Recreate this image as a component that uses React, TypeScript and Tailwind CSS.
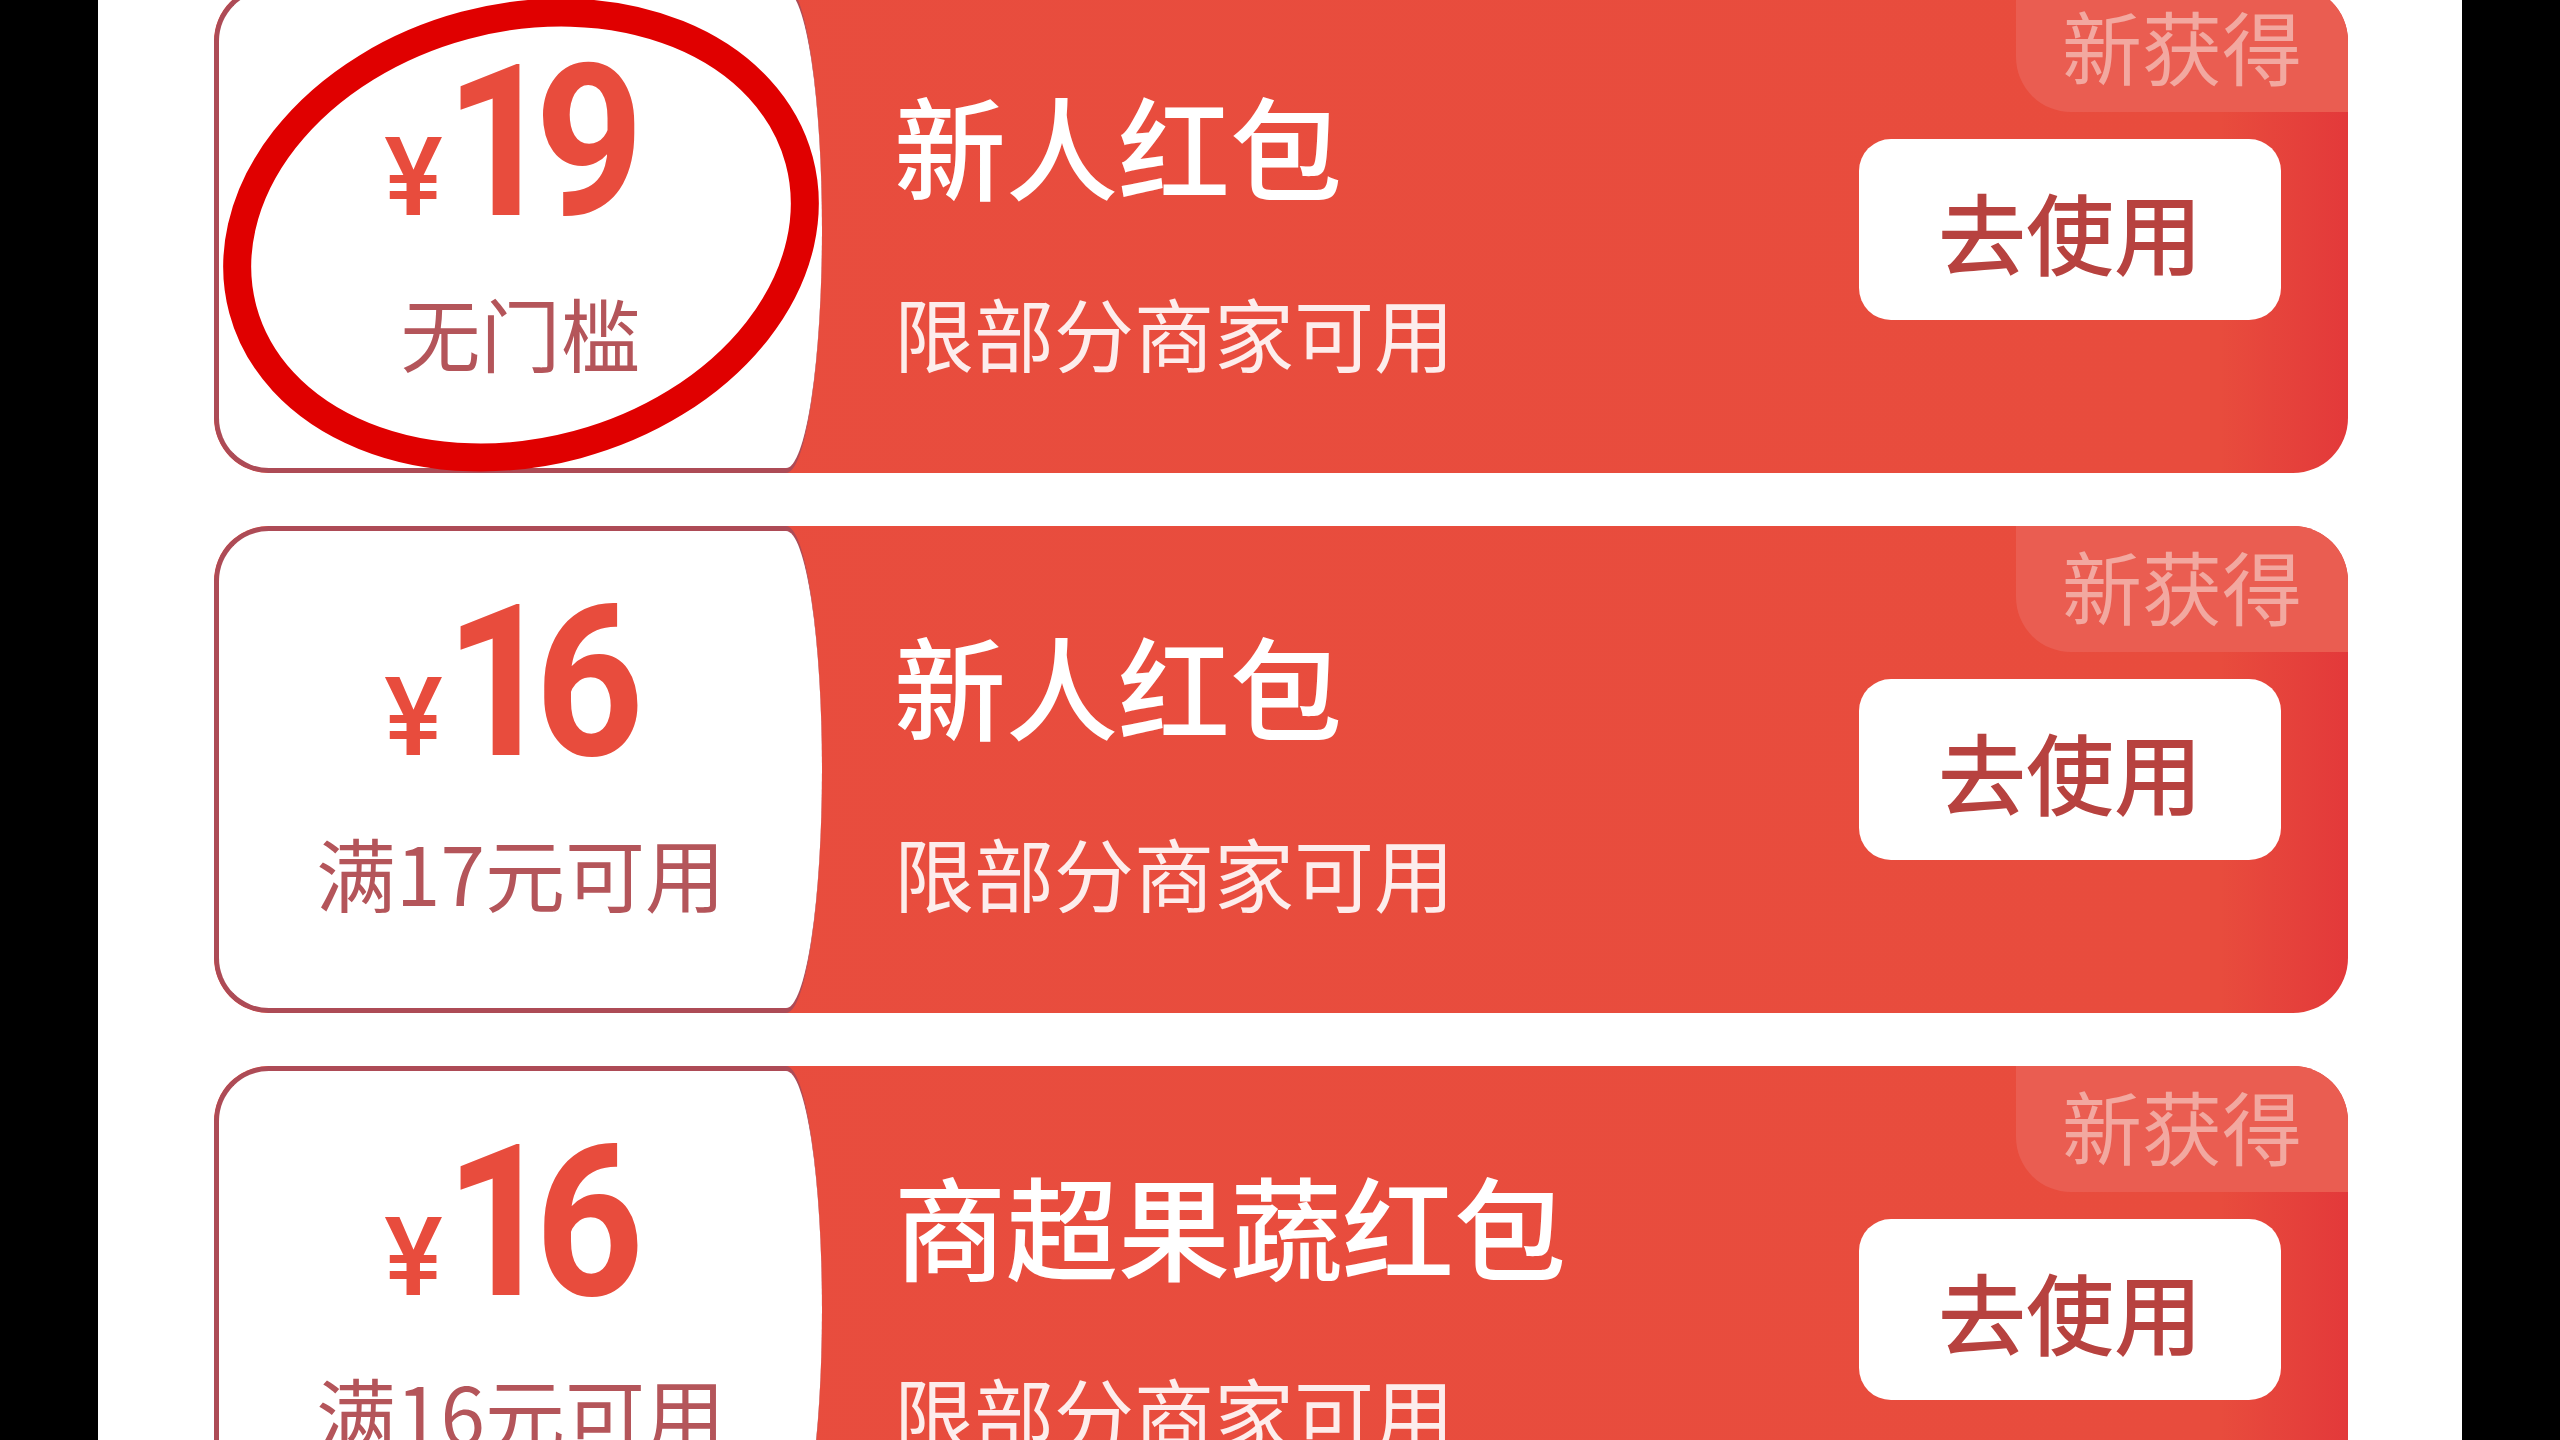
import React from "react";

type Coupon = { amount: string; cond: string; title: string; circled?: boolean };

const coupons: Coupon[] = [
  { amount: "19", cond: "无门槛", title: "新人红包", circled: true },
  { amount: "16", cond: "满17元可用", title: "新人红包" },
  { amount: "16", cond: "满16元可用", title: "商超果蔬红包" },
];

const cjk = "font-['Noto_Sans_CJK_SC','Noto_Sans',sans-serif]";

function CouponCard({ c }: { c: Coupon }) {
  return (
    <div className="relative shrink-0">
      <div className="relative flex h-[487px] overflow-hidden rounded-[55px] bg-[linear-gradient(90deg,#e84d3e_0%,#e84c3d_94%,#e3393a_100%)]">
        {/* left white stub */}
        <div className="flex w-[608px] shrink-0 flex-col items-center rounded-l-[55px] rounded-r-[36px_50%] border-[5px] border-r-0 border-[#ad4b56] bg-white pt-[47px]">
          <div className="flex items-baseline font-['Roboto',sans-serif] leading-none text-[#e84c3d]">
            <span className="mr-[2px] text-[110px] font-medium">¥</span>
            <span className="mr-[12px] inline-block origin-left scale-x-[0.9] text-[211px] font-bold tracking-[-0.1em]">
              {c.amount}
            </span>
          </div>
          <div className={`mt-[42px] text-[80px] leading-none text-[#b4555a] ${cjk}`}>{c.cond}</div>
        </div>

        {/* red body */}
        <div className="flex flex-1 items-center">
          <div className={`flex flex-col self-start pl-[72px] pt-[102px] ${cjk}`}>
            <div className="whitespace-nowrap text-[112px] font-medium leading-none text-white">{c.title}</div>
            <div className="mt-[91px] whitespace-nowrap text-[80px] leading-none text-white/90">限部分商家可用</div>
          </div>
          <button
            className={`ml-auto mr-[67px] flex h-[181px] w-[422px] items-center justify-center rounded-[32px] bg-white text-[88px] font-medium leading-none text-[#b7423f] ${cjk}`}
          >
            去使用
          </button>
        </div>

        {/* corner tag */}
        <div
          className={`absolute right-0 top-0 flex h-[126px] w-[332px] justify-end rounded-bl-[55px] bg-[#ea5d51] pr-[46px] pt-[18px] text-[80px] leading-none text-[#f2a8a0] ${cjk}`}
        >
          新获得
        </div>
      </div>

      {c.circled && (
        <svg
          className="pointer-events-none absolute left-0 top-0 overflow-visible"
          width="620"
          height="500"
          viewBox="0 0 620 500"
        >
          <ellipse
            cx="307"
            cy="249"
            rx="288"
            ry="217"
            transform="rotate(-15 307 249)"
            fill="none"
            stroke="#e00000"
            strokeWidth="28"
          />
        </svg>
      )}
    </div>
  );
}

export default function App() {
  return (
    <div className="flex h-[1440px] w-full justify-center overflow-hidden bg-black">
      <div className="w-[2364px] bg-white pl-[116px] pr-[114px]">
        <div className="-mt-[14px] flex flex-col gap-[53px]">
          {coupons.map((c, i) => (
            <CouponCard key={i} c={c} />
          ))}
        </div>
      </div>
    </div>
  );
}
